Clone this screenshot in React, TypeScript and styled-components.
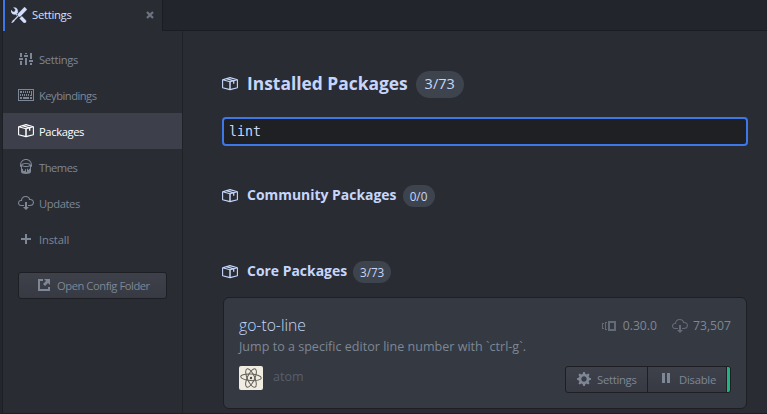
import React from "react";
import styled, { createGlobalStyle } from "styled-components";

const Global = createGlobalStyle`
  * { box-sizing: border-box; }
  html, body, #root { margin: 0; height: 100%; }
  body {
    background: #2a2c33;
    color: #7d8796;
    font-family: "Open Sans", "Noto Sans", sans-serif;
    font-size: 11.3px;
    line-height: 16px;
    white-space: nowrap;
    overflow: hidden;
  }
`;

/* ---------- icons ---------- */

const Svg = styled.svg`
  display: block;
  flex: none;
  fill: currentColor;
`;

const PackageIcon = () => (
  <Svg width="16" height="16" viewBox="0 0 16 16">
    <g fill="none" stroke="currentColor" strokeLinejoin="round">
      <path d="M.6 3.7L8 1.6l7.4 2.1v8L8 13.6.6 11.7zM.6 3.7L8 5.8l7.4-2.1" strokeWidth="1.1" />
      <path d="M8 5.8v7.8" strokeWidth="1.5" />
      <path d="M4.4 2.7l7.3 2.1v3" strokeWidth="1.3" />
    </g>
  </Svg>
);

const ToolsIcon = () => (
  <Svg width="16" height="16" viewBox="0 0 16 16">
    <path
      d="M4.48 7.27c.26.26 1.28 1.33 1.28 1.33l.56-.58-.88-.91 1.69-1.8s-.76-.74-.43-.45c.32-1.19.03-2.51-.87-3.44C4.93.5 3.66.2 2.52.51l1.93 2-.51 1.96-1.89.52-1.93-1.99C-.19 4.17.1 5.48 1 6.4c.94.98 2.29 1.26 3.48.87zm6.44 1.94l-2.33 2.3 3.84 3.98c.31.33.73.49 1.14.49.41 0 .82-.16 1.14-.49.63-.65.63-1.7 0-2.35l-3.79-3.93zM16 2.53L13.55 0 6.33 7.46l.88.91-4.31 4.46-.99.53-1.39 2.27.35.37 2.2-1.44.51-1.02L7.9 9.08l.88.91L16 2.53z"
      stroke="currentColor"
      strokeWidth=".25"
    />
  </Svg>
);

const SlidersIcon = () => (
  <Svg width="16" height="16" viewBox="0 0 16 16">
    <path d="M2 2h2v4H2zM1 7h4v2H1zM2 10h2v4H2zM7 2h2v1H7zM6 4h4v2H6zM7 7h2v7H7zM12 2h2v6h-2zM11 9h4v2h-4zM12 12h2v2h-2z" />
  </Svg>
);

const KeyboardIcon = () => (
  <Svg width="16" height="16" viewBox="0 0 16 16">
    <path
      fillRule="evenodd"
      d="M0 2h16v12H0zM1 3v10h14V3zM2 4h2v2H2zM5 4h1v2H5zM7 4h1v2H7zM9 4h1v2H9zM11 4h1v2h-1zM13 4h1v4h-1zM2 7h1v2H2zM4 7h1v2H4zM6 7h1v2H6zM8 7h1v2H8zM10 7h1v2h-1zM12 8h2v1h-2zM2 10h2v2H2zM5 10h6v2H5zM12 10h2v2h-2z"
    />
  </Svg>
);

const PaintIcon = () => (
  <Svg width="16" height="16" viewBox="-2 0 16 16">
    <path d="M6 0C2.69 0 0 2.69 0 6v1c0 .55.45 1 1 1v5c0 1.1 2.24 2 5 2s5-.9 5-2V8c.55 0 1-.45 1-1V6c0-3.31-2.69-6-6-6zm3 10v.5c0 .28-.22.5-.5.5s-.5-.22-.5-.5V10c0-.28-.22-.5-.5-.5s-.5.22-.5.5v2.5c0 .28-.22.5-.5.5s-.5-.22-.5-.5v-2c0-.28-.22-.5-.5-.5s-.5.22-.5.5v.5c0 .55-.45 1-1 1s-1-.45-1-1v-1c-.55 0-1-.45-1-1V7.2c.91.49 2.36.8 4 .8 1.64 0 3.09-.31 4-.8V9c0 .55-.45 1-1 1zM6 7c-1.68 0-3.12-.41-3.71-1C2.88 5.41 4.32 5 6 5c1.68 0 3.12.41 3.71 1-.59.59-2.03 1-3.71 1zm0-3c-2.76 0-5 .89-5 2 0-2.76 2.24-5 5-5s5 2.24 5 5c0-1.1-2.24-2-5-2z" />
  </Svg>
);

const CloudIcon = () => (
  <Svg width="16" height="16" viewBox="0 0 16 16">
    <path d="M9 12h2l-3 3-3-3h2V7h2v5zm3-8c0-.44-.91-3-4.5-3C5.08 1 3 2.92 3 5 1.02 5 0 6.52 0 8c0 1.53 1 3 3 3h3V9.9H3C1.2 9.9 1.1 8.28 1.1 8c0-.17.05-1.9 1.9-1.9h1.1V5c0-1.39 1.66-2.9 3.4-2.9 2.55 0 3.33 1.65 3.4 1.9v1.1H12c.81 0 2.9.22 2.9 2.4 0 2.19-2.45 2.4-2.9 2.4h-2V11h2c2.08 0 4-1.16 4-3.5C16 5.06 14.08 4 12 4z" />
  </Svg>
);

const PlusIcon = () => (
  <Svg width="16" height="16" viewBox="0 0 16 16">
    <path d="M7 3h2v4h4v2H9v4H7V9H3V7h4z" />
  </Svg>
);

const ExternalIcon = () => (
  <Svg width="12" height="13" viewBox="0 0 12 13">
    <path d="M0 0h5v2H2v8h8V8h2v4H0zM6 0h6v6l-2-2-3 3-2-2 3-3z" />
  </Svg>
);

const VersionsIcon = () => (
  <Svg width="15" height="16" viewBox="0 0 15 16">
    <path fillRule="evenodd" d="M6 3h8v10H6zM8 5v6h4V5zM3 4h2v1H4v6h1v1H3zM0 5h2v1H1v4h1v1H0z" />
  </Svg>
);

const GearIcon = () => (
  <Svg width="14" height="16" viewBox="0 0 14 16">
    <path d="M14 8.77v-1.6l-1.94-.64-.45-1.09.88-1.84-1.13-1.13-1.81.91-1.09-.45-.69-1.92h-1.6l-.63 1.94-1.11.45-1.84-.88-1.13 1.13.91 1.81-.45 1.09L0 7.23v1.59l1.94.64.45 1.09-.88 1.84 1.13 1.13 1.81-.91 1.09.45.69 1.92h1.59l.63-1.94 1.11-.45 1.84.88 1.13-1.13-.92-1.81.47-1.09L14 8.75v.02zM7 10.7c-1.5 0-2.7-1.2-2.7-2.7s1.2-2.7 2.7-2.7 2.7 1.2 2.7 2.7-1.2 2.7-2.7 2.7z" />
  </Svg>
);

const PauseIcon = () => (
  <Svg width="8" height="12" viewBox="0 0 8 12">
    <path d="M0 0h3v10H0zM5 0h3v10H5z" />
  </Svg>
);

const CloseIcon = () => (
  <Svg width="8" height="8" viewBox="0 0 8 8">
    <path d="M1 1l6 6M7 1L1 7" stroke="currentColor" strokeWidth="2.3" />
  </Svg>
);

const AtomAvatar = () => (
  <Svg width="24" height="24" viewBox="0 0 24 24">
    <rect width="24" height="24" rx="2" fill="#f1ece2" />
    <g fill="none" stroke="#625d57" strokeWidth="1">
      <ellipse cx="12" cy="11.3" rx="10.3" ry="3.3" transform="rotate(4 12 11.3)" />
      <ellipse cx="12" cy="12" rx="10" ry="3.7" transform="rotate(66 12 12)" />
      <ellipse cx="12" cy="12" rx="10" ry="3.7" transform="rotate(115 12 12)" />
    </g>
    <circle cx="12" cy="12" r="1.2" fill="#4a4641" />
  </Svg>
);

/* ---------- layout ---------- */

const Label = styled.span<{ $track?: number }>`
  letter-spacing: ${(p) => p.$track ?? 0}px;
`;

const Window = styled.div`
  width: 767px;
  height: 414px;
  display: flex;
  flex-direction: column;
  border-left: 2px solid #23262c;
  border-bottom: 1px solid #1d1f24;
`;

const TabBar = styled.div`
  flex: none;
  height: 31px;
  display: flex;
  border-left: 1px solid #1d1f24;
`;

const Tab = styled.div`
  width: 160px;
  display: flex;
  align-items: center;
  padding: 0 8px 2px 6px;
  border-left: 2px solid #3d77e8;
  border-right: 1px solid #1b1d22;
  color: #d3e0ff;
`;

const TabTitle = styled.span`
  flex: 1;
  padding: 1px 0 0 5px;
  letter-spacing: -0.3px;
`;

const TabClose = styled.span`
  color: #6c7381;
`;

const TabFill = styled.div`
  flex: 1;
  background: #22252b;
  border-bottom: 1px solid #1b1d22;
`;

const Body = styled.div`
  flex: 1;
  min-height: 0;
  display: flex;
  border-left: 1px solid #1d1f24;
`;

const Sidebar = styled.nav`
  flex: none;
  width: 180px;
  padding-top: 10px;
  border-right: 1px solid #202227;
`;

const NavItem = styled.div<{ $active?: boolean }>`
  height: 36px;
  display: flex;
  align-items: center;
  gap: 5px;
  padding-left: 15px;
  background: ${(p) => (p.$active ? "#3d404a" : "transparent")};
  color: ${(p) => (p.$active ? "#ffffff" : "#7d8796")};
  font-size: 11.2px;

  ${Label} {
    padding-top: 2px;
  }
`;

const ConfigButton = styled.div`
  width: 149px;
  height: 27px;
  margin: 15px 0 0 15px;
  display: flex;
  align-items: center;
  gap: 7px;
  padding-left: 19px;
  border: 1px solid #1d1f24;
  border-radius: 3px;
  background: linear-gradient(#3e414a, #373a43);
  font-size: 11.2px;

  ${Label} {
    padding-top: 1px;
  }
`;

const Content = styled.main`
  flex: 1;
  display: flex;
  flex-direction: column;
  padding: 0 19px 0 39px;
`;

const Heading = styled.h2<{ $top: number; $big?: boolean }>`
  display: flex;
  align-items: center;
  height: ${(p) => (p.$big ? 27 : 22)}px;
  margin: ${(p) => p.$top}px 0 0;
  color: #c6d6fb;
  font-size: ${(p) => (p.$big ? 17.4 : 13.95)}px;
  font-weight: 700;

  ${Svg} {
    margin-bottom: 1px;
  }

  ${Label} {
    margin: 0 ${(p) => (p.$big ? 8 : 6)}px 3px 9px;
  }
`;

const Badge = styled.span<{ $w: number; $big?: boolean }>`
  display: flex;
  align-items: center;
  justify-content: center;
  width: ${(p) => p.$w}px;
  height: 100%;
  padding-bottom: ${(p) => (p.$big ? 2 : 0)}px;
  border-radius: 14px;
  background: #3e444e;
  font-size: ${(p) => (p.$big ? 14.5 : 11.7)}px;
  font-weight: 400;
`;

const Search = styled.div`
  height: 29px;
  margin-top: 19px;
  display: flex;
  align-items: center;
  padding: 0 5px;
  border: 2px solid #3d77e8;
  border-radius: 4px;
  background: #1f2024;
  color: #c6d6fb;
  font: 13.3px "DejaVu Sans Mono", monospace;
`;

const Card = styled.article`
  height: 112px;
  margin: 14px 1px 0;
  padding: 16px 15px 0;
  border: 1px solid #1d1f24;
  border-radius: 6px;
  background: #353941;
`;

const CardHead = styled.div`
  display: flex;
  align-items: center;
  height: 23px;
`;

const Title = styled.span`
  flex: 1;
  padding-bottom: 2px;
  color: #c6d6fb;
  font-size: 15.7px;
  font-weight: 300;
`;

const Stat = styled.span<{ $gap: number }>`
  display: flex;
  align-items: center;
  gap: ${(p) => p.$gap}px;
  margin-left: 15px;
  font-size: 12.2px;

  svg {
    color: #626a78;
  }
`;

const Description = styled.div`
  height: 20px;
  font-size: 12.57px;
  line-height: 20px;
`;

const CardFoot = styled.div`
  display: flex;
  align-items: flex-start;
  margin-top: 9px;
`;

const Author = styled.span`
  flex: 1;
  padding: 3px 0 0 10px;
  color: #565f6c;
  font-size: 12.5px;
`;

const ButtonGroup = styled.div`
  display: flex;
  height: 27px;
  border: 1px solid #1d1f24;
  border-radius: 3px;
  background: linear-gradient(#3e414a, #373a43);
  overflow: hidden;
`;

const CardButton = styled.div<{ $w: number; $pad: number; $gap: number }>`
  display: flex;
  align-items: center;
  width: ${(p) => p.$w}px;
  padding-left: ${(p) => p.$pad}px;
  gap: ${(p) => p.$gap}px;
  border-right: 1px solid #1d1f24;

  ${Svg} {
    margin-bottom: 1px;
  }

  ${Label} {
    padding-top: 1px;
  }
`;

const EnabledMark = styled.div`
  width: 3px;
  background: #1fb57f;
`;

const NAV = [
  { label: "Settings", Icon: SlidersIcon, track: -0.3 },
  { label: "Keybindings", Icon: KeyboardIcon, track: -0.52 },
  { label: "Packages", Icon: PackageIcon, track: -0.38, active: true },
  { label: "Themes", Icon: PaintIcon, track: -0.48 },
  { label: "Updates", Icon: CloudIcon, track: -0.4 },
  { label: "Install", Icon: PlusIcon, track: -0.15 },
];

export default function App() {
  return (
    <Window>
      <Global />
      <TabBar>
        <Tab>
          <ToolsIcon />
          <TabTitle>Settings</TabTitle>
          <TabClose>
            <CloseIcon />
          </TabClose>
        </Tab>
        <TabFill />
      </TabBar>
      <Body>
        <Sidebar>
          {NAV.map(({ label, Icon, track, active }) => (
            <NavItem key={label} $active={active}>
              <Icon />
              <Label $track={track}>{label}</Label>
            </NavItem>
          ))}
          <ConfigButton>
            <ExternalIcon />
            <Label $track={-0.45}>Open Config Folder</Label>
          </ConfigButton>
        </Sidebar>
        <Content>
          <Heading $top={40} $big>
            <PackageIcon />
            <Label>Installed Packages</Label>
            <Badge $w={48} $big>3/73</Badge>
          </Heading>
          <Search>lint</Search>
          <Heading $top={39}>
            <PackageIcon />
            <Label>Community Packages</Label>
            <Badge $w={32}>0/0</Badge>
          </Heading>
          <Heading $top={54}>
            <PackageIcon />
            <Label>Core Packages</Label>
            <Badge $w={38}>3/73</Badge>
          </Heading>
          <Card>
            <CardHead>
              <Title>go-to-line</Title>
              <Stat $gap={6}>
                <VersionsIcon />
                0.30.0
              </Stat>
              <Stat $gap={5}>
                <CloudIcon />
                73,507
              </Stat>
            </CardHead>
            <Description>Jump to a specific editor line number with `ctrl-g`.</Description>
            <CardFoot>
              <AtomAvatar />
              <Author>atom</Author>
              <ButtonGroup>
                <CardButton $w={82} $pad={11} $gap={6}>
                  <GearIcon />
                  <Label $track={-0.3}>Settings</Label>
                </CardButton>
                <CardButton $w={79} $pad={14} $gap={9}>
                  <PauseIcon />
                  <Label $track={-0.25}>Disable</Label>
                </CardButton>
                <EnabledMark />
              </ButtonGroup>
            </CardFoot>
          </Card>
        </Content>
      </Body>
    </Window>
  );
}
